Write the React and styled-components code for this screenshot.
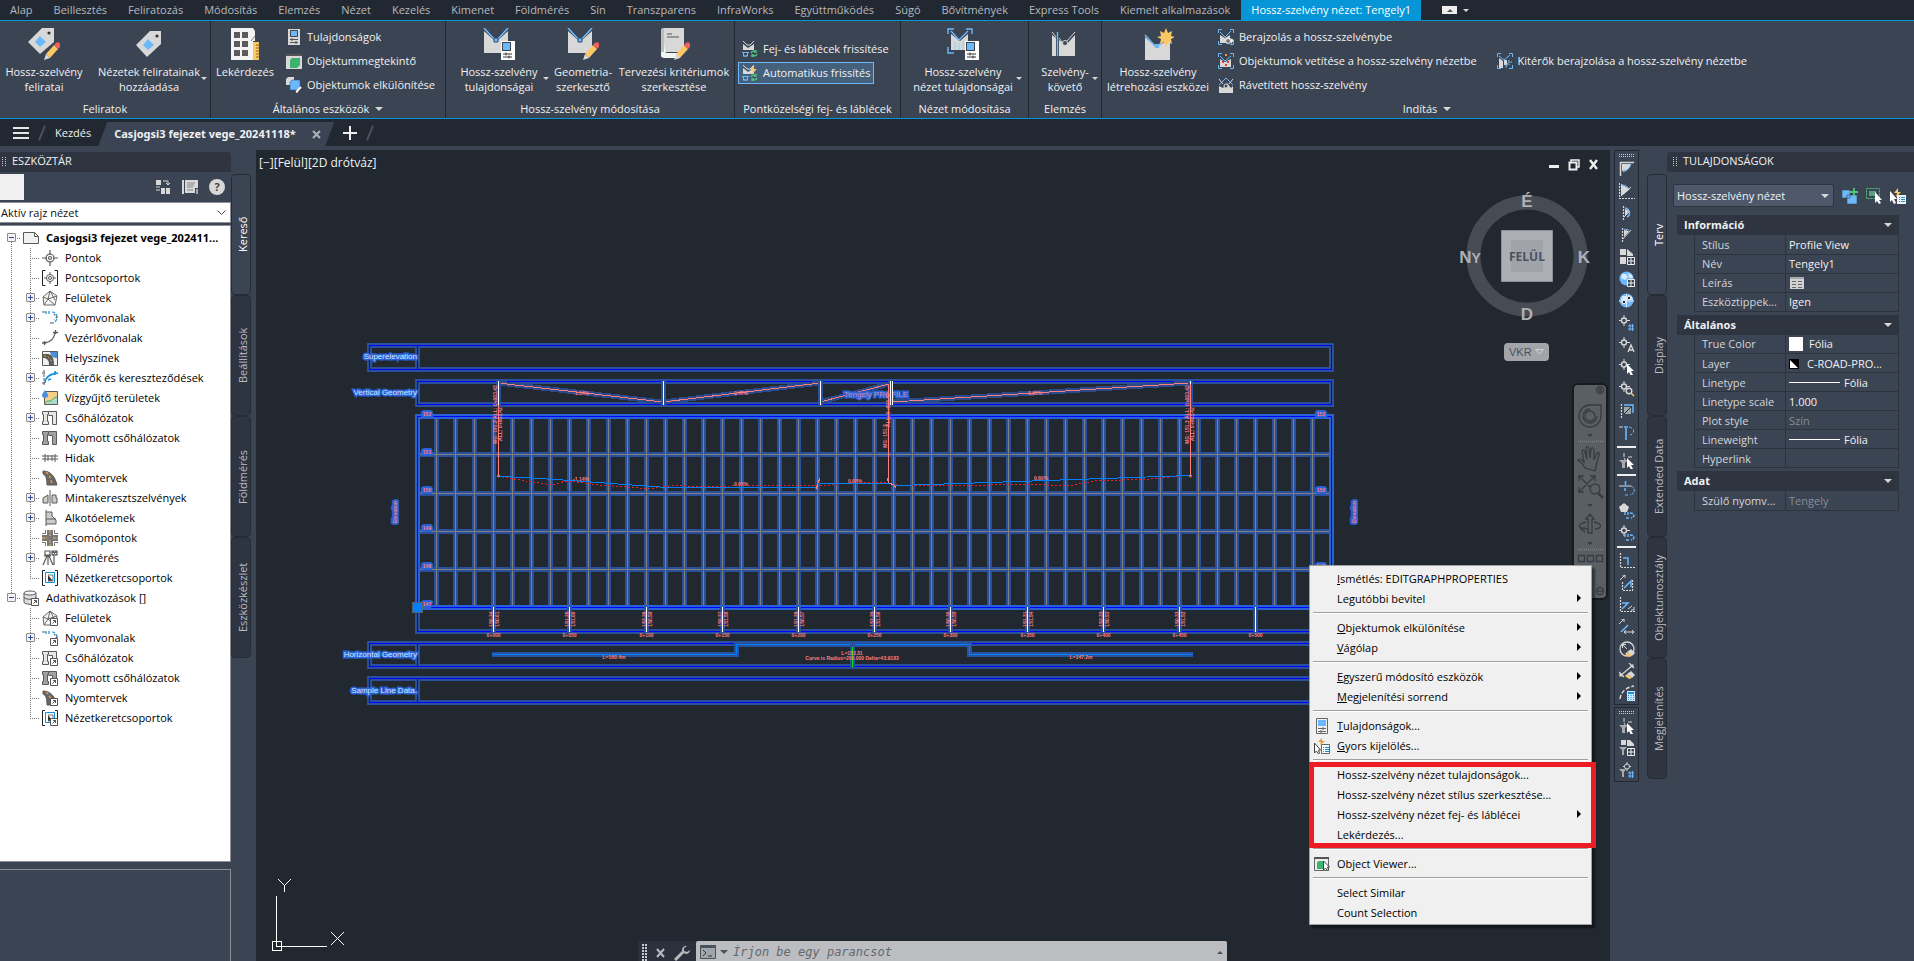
import React from 'react';
import styled, { createGlobalStyle, css } from 'styled-components';

const c = {
  dark: '#222831',
  panel: '#3b4453',
  header: '#2e3440',
  line: '#2c333e',
  accent: '#0696d7',
  text: '#f0f1f2',
  dim: '#b9bdc3',
  canvas: '#212830',
};

const Global = createGlobalStyle`
  * { box-sizing: border-box; }
  html, body, #root { height: 100%; }
  body { margin: 0; overflow: hidden; font: 11px/16px "Open Sans", "Noto Sans", sans-serif; color: ${c.text}; background: ${c.panel}; }
  button, select, input { font: inherit; color: inherit; margin: 0; border: 0; padding: 0; background: none; }
  ul { list-style: none; margin: 0; padding: 0; }
  svg { display: block; flex: none; }
`;

/* ---------- icons ---------- */
const G = '#d8d8d8';
const B = '#6cb8fb';
const Y = '#fbc866';
const GR = '#4fc57c';
const K = '#5a5a5a';

const Pencil = () => (
  <g>
    <path d="M18 26 26 17l4 4-8 9z" fill={Y} />
    <path d="M26 17l2-2c2-2 6 1 4 4l-2 2z" fill="#f0605c" />
    <path d="M18 26l4 4-6 2z" fill={G} />
  </g>
);
const Props = () => (
  <g>
    <path d="M18 13h14v19H18z" fill="#fff" />
    <path d="M19 14h9v9h-9z" fill="#3b4453" />
    <path d="M20 15h7v7h-7z" fill={B} />
    <path d="M20 26h9M20 29h9" stroke="#333" />
    <path d="M23 24.500v3M26 27.500v3" stroke="#333" />
  </g>
);
const Notch = () => (
  <g>
    <path d="M1 3 13 14 25 3V25H1z" fill={G} />
    <path d="M1 0 11 11M25 0 15 11" stroke={B} strokeWidth="1.600" />
    <path d="M11 10h4v4h-4z" fill={B} stroke="#2c4d70" />
  </g>
);
const big = {
  tagEdit: <g><path d="M14 0h12v14L12 26 0 14z" fill={G} /><circle cx="21" cy="5" r="1.600" fill="#333" /><path d="M12 8l6 6-6 5-5-5z" fill={B} /><Pencil /></g>,
  tag: <g transform="translate(3 3)"><path d="M14 0h11v13L11 26 0 14z" fill={G} /><circle cx="21" cy="5" r="1.600" fill="#333" /><path d="M12 8l6 6-6 5-5-5z" fill={B} /></g>,
  inquiry: <g><path d="M2 0h22l2 3v10H24v19H2z" fill="#f4f4f2" />{[4, 13, 22].map((y) => [5, 13].map((x) => <path key={`${x}-${y}`} d={`M${x} ${y}h6v6h-6z`} fill={K} />))}<path d="M24 14h6v18h-6z" fill={Y} /><path d="M27 17h3M27 20h3M27 23h3M27 26h3M27 29h3" stroke="#8a6a20" /><path d="M22 13l4-5" stroke="#777" /></g>,
  profProps: <g><Notch /><Props /></g>,
  profEdit: <g><Notch /><Pencil /></g>,
  book: <g><path d="M3 3c0-2 1-3 3-3h20v24H9c-3 0-4 1-4 3z" fill={G} /><path d="M3 3v24c0 3 2 3 4 3h15v-5H8" fill="#f4f4f4" /><path d="M3 3c0-2 1-3 3-3v24H3z" fill="#bdbdbd" /><path d="M9 6h5M9 9h12" stroke="#555" /><Pencil /></g>,
  viewProps: <g><path d="M4 6l9 7 8-7v16H4z" fill={G} /><path d="M4 3l8 9 9-9" fill="none" stroke={B} strokeWidth="1.400" /><path d="M8 14v8M12 15v7M16 13v9" stroke="#8fd6e0" /><path d="M1 6V1h6M19 1h6v5M1 19v6h6" fill="none" stroke={B} strokeWidth="1.400" /><Props /></g>,
  tracker: <g><path d="M3 7l4 3v18H3zM10 12l7 5 9-10v21H10z" fill={G} /><path d="M3 4l4 5M10 10l4 5M26 4l-8 9" stroke={G} /><path d="M8.500 4v24" stroke={B} strokeWidth="1.400" /><circle cx="16" cy="15" r="2.500" fill="#3b4453" stroke={G} /></g>,
  profNew: <g><path d="M3 9 14 19l14-8V32H3z" fill={G} /><path d="M3 7l10 11M16 18l6-6" stroke={B} strokeWidth="1.600" /><path d="M13 16h4v4h-4z" fill={B} /><path d="M24 0l2 5 4-2-1 5 4 1-4 2 1 5-4-2-2 5-2-5-4 2 1-5-4-2 4-1-1-5 4 2z" fill={Y} /></g>,
};
const Mini = () => <g><path d="M1 3l5 4 6-4v6H1z" fill={G} /><path d="M1 0l4 4h3l4-4" fill="none" stroke={G} /></g>;
const Cycle = () => <g><path d="M0 11.500h7M1.500 12v3h4v-3M1.500 15h4" stroke={B} fill="none" /><path d="M9 12a3 3 0 0 1 5-1M15 13a3 3 0 0 1-5 1M14 9v2h-2M10 16v-2h2" fill="none" stroke={GR} strokeWidth="1.400" /></g>;
const Corners = () => <path d="M.5 4V.5H4M12 .5h3.500V4M.5 12v3.500H4M12 15.500h3.500V12" fill="none" stroke={B} />;
const small = {
  props: <g><path d="M2 0h12v16H2z" fill={G} /><path d="M4.500 1.500h7v6h-7z" fill={B} stroke="#444" /><path d="M4 10.500h8M4 13.500h8M6 9v3M10 12v3" stroke="#555" /></g>,
  viewer: <g><path d="M0 1h16v15H0z" fill={G} /><path d="M0 1h16v2H0z" fill="#555" /><path d="M4 7l2-2h8v7l-3 3H4z" fill="#3cb46e" /></g>,
  isolate: <g><path d="M0 2l2-2h6v5L6 8H0z" fill={G} /><path d="M4 5l2-2h8v7l-3 3H4z" fill={B} stroke="#2d5f93" strokeWidth=".6" /><path d="M11 14l4-4M10 15l2-1" stroke="#fff" strokeWidth="2" /></g>,
  refresh: <g><Mini /><Cycle /></g>,
  auto: <g><Mini /><path d="M12 0l-4 5h3l-1 4 5-5h-3z" fill={Y} /><Cycle /></g>,
  draw: <g><Corners /><path d="M2 6l5 3 5-3v8H2z" fill={G} /><path d="M2 3l5 5 6-6" fill="none" stroke={B} /><circle cx="10" cy="12" r="2.500" fill="#777" stroke="#eee" /><path d="M12 9l4 2-3 4z" fill="#eee" /></g>,
  project: <g><Corners /><path d="M2 6l5 3 6-3v8H2z" fill={G} /><path d="M2 3l5 5 6-5" fill="none" stroke={B} /><path d="M7 1h2v2H7z" fill="#ef9a3c" /><path d="M4 8h2v2H4zM9 8h2v2H9zM7 11h2v2H7z" fill="#e63c3c" /></g>,
  overlay: <g><path d="M1 9l4 2 4-5 4 5 2-2v7H1z" fill={G} /><path d="M1 8l7-7 7 7" fill="none" stroke={B} /><path d="M1 2l4 5M15 2l-4 5" stroke={G} /><circle cx="8" cy="9" r="2" fill="#3b4453" stroke={G} /></g>,
  offset: <g><Corners /><path d="M2 5l4 3v7H2zM7 7h3v5H7z" fill={G} /><path d="M2 3l5 4 6-5" fill="none" stroke={B} /><path d="M9 15c0-4 2-6 6-6M8 12h4M12 7v5" fill="none" stroke={B} strokeDasharray="3 1" /></g>,
};

const Ref = () => <g><path d="M8.500 8.500h7v7h-7z" fill="#fff" stroke="#555" /><path d="M10.500 13.500l3-3M11 10.500h2.500V13" fill="none" stroke="#555" /></g>;
const Pipe = ({ f }) => <path d="M.5 1.500h6v3h-1v7h1v3h-6v-3h1v-7h-1zM6.500 1.500h8v13h-4v-9h-4" fill={f} stroke={K} />;
const tree = {
  doc: <path d="M.5 2.500h11l4 4v7H.5zM11.500 2.500v4h4" fill="#f1f1f1" stroke={K} />,
  point: <g fill="none" stroke={K} strokeWidth="1.200"><circle cx="8" cy="8" r="1.500" /><circle cx="8" cy="8" r="4" /><path d="M8 0v5M8 11v5M0 8h5M11 8h5" /></g>,
  pointGroup: <g fill="none"><path d="M3.500.5h-3v15h3M12.500.5h3v15h-3" stroke="#222" /><circle cx="8" cy="8" r="1.500" stroke={K} /><circle cx="8" cy="8" r="3.500" stroke={K} /><path d="M8 2v3M8 11v3M2 8h3M11 8h3" stroke={K} /></g>,
  surface: <path d="M8 1l7 5-2 9H2L1 7zM8 1l-2 8-5-2M8 1l5 9M6 9l7 6M15 6l-9 3-4 6" fill="#f4f4f4" stroke={K} strokeWidth=".9" />,
  align: <g fill="none" strokeWidth="1.200"><path d="M0 2h3M8 13h4" stroke={K} /><path d="M4 1v3M7 1v3M10 2c4 0 5 3 5 5s-1 4-2 5" stroke="#0f8fe0" strokeDasharray="3 2" /><path d="M12 4l3 3-3 3" stroke={K} strokeDasharray="2 2" /></g>,
  feature: <path d="M0 13h4M2.500 11v4M3 13c6-1 9-4 10-10M13.500 0v4M11 2.500h5" fill="none" stroke={K} strokeWidth="1.300" />,
  site: <g><path d="M.5 1.500h15v14H.5z" fill="#f0f0f0" stroke={K} /><path d="M8 2h7v6c-4 0-6-2-7-6z" fill="#4a90d9" /><path d="M1 4h5c5 1 6 5 6 11H7C7 10 5 8 1 8z" fill={K} /><path d="M2 6c4 0 7 2 8 8" stroke="#ef9a3c" fill="none" strokeDasharray="2 2" /></g>,
  turnout: <g fill="none"><path d="M2 0v15M0 3h4M0 13h4" stroke={K} strokeDasharray="3 1" /><path d="M3 13c0-6 5-9 13-10M5 8l4-4M6 10l3-1M13 1v4" stroke="#0f8fe0" strokeWidth="1.600" /></g>,
  catchment: <g><path d="M2.500 1.500h13v13h-13z" fill="#f6cf8b" stroke={K} /><path d="M3 14l12-6v6z" fill="#a8dcc8" /><path d="M3 14c0-3 3-3 5-3s3-4 7-4" fill="none" stroke="#2a7" /><path d="M3 0c2 3 3 4 3 5a3 3 0 0 1-6 0c0-1 1-2 3-5z" fill="#4a90d9" /></g>,
  pipe: <Pipe f="#e6e6e6" />,
  pressure: <Pipe f="#a0a0a0" />,
  bridge: <path d="M0 6h16M0 9h16M3 4v8M6 5v6M10 5v6M13 4v8" stroke={K} fill="none" />,
  corridor: <g><path d="M1 1c8 0 12 6 14 14H5C5 9 4 5 1 4z" fill="#666" stroke={K} /><path d="M4 2c4 3 5 7 6 13" fill="none" stroke="#ef9a3c" strokeWidth="1.500" strokeDasharray="3 2" /></g>,
  assembly: <g><path d="M1 8l5-3v8H1zM10 5h4v3h1v5h-5z" fill="#ccc" stroke={K} /><path d="M8 0v16" stroke={K} /></g>,
  subassembly: <path d="M4 0v16M4 2h6v4l4 4v4H4M4 9h10" fill="#ccc" stroke={K} />,
  intersection: <g><path d="M5 0h6v5h5v6h-5v5H5v-5H0V5h5z" fill="#777" /><path d="M8 0v6M8 10v6M0 8h5M11 8h5" stroke="#f5b35a" strokeDasharray="3 1" /><path d="M0 3.500h3.500V0M16 3.500h-3.500V0M0 12.500h3.500V16M16 12.500h-3.500V16" fill="none" stroke="#777" /></g>,
  survey: <g fill="none" stroke={K} strokeWidth="1.200"><path d="M3 1h5v4H3zM5 6L1 15M6 6v9M7 6l4 9M2 6h7M12 5v10M10 1h5v4h-5zM10 1l5 4M15 1l-5 4" /></g>,
  frame: <g fill="none"><path d="M3 .5H.5v15H3M13 .5h2.500v15H13" stroke="#222" /><path d="M3.500 2.500h9v10h-9z" stroke="#0f8fe0" /><path d="M6 5l5 6H6z" fill="#333" /><path d="M6 5h5v6H6" stroke="#777" /></g>,
  data: <g><path d="M1 3v9c0 3 12 3 12 0V3" fill="#ddd" stroke={K} /><ellipse cx="7" cy="3" rx="6" ry="2" fill="#f5f5f5" stroke={K} /><path d="M1 7c0 3 12 3 12 0" fill="none" stroke={K} /><Ref /></g>,
};

const Pt = () => <g fill="none" stroke={G}><path d="M5 0v3M5 8v3M0 5.500h2M8 5.500h3" /><circle cx="5" cy="5.500" r="2.500" strokeWidth="1.400" /></g>;
const Cursor = () => <path d="M8 5v10l2-2 2 4 2-1-2-4h3z" fill="#fff" />;
const Alig = () => <path d="M6 9v3M9 9v3M11 10c5 0 5 4 1 5M7 15h3" fill="none" stroke={B} strokeWidth="1.400" strokeDasharray="3 1" />;
const Funnel = () => <g><path d="M5 0v4M5 5l2 3M9 4h4" stroke={G} /><path d="M0 7h9L6 10v5H3v-5z" fill="#aaa" /></g>;
const Globe = () => <g><circle cx="7.500" cy="7.500" r="7" fill={B} /><path d="M3 3l4 0 2 3-3 3-4-2zM9 2l4 2 1 3-4 0z" fill="#d7ecfd" /></g>;
const Dots = ({ d }) => <path d={d} fill="none" stroke={G} strokeWidth="1.200" strokeDasharray="2 1" />;
const Grid4 = () => <g><path d="M8.500 8.500h7v7h-7z" fill="#3b4453" stroke="#eee" /><path d="M12 9v6M9 12h6" stroke="#eee" /></g>;
const Eraser = () => <g><path d="M8 11l4-3 4 4-3 3z" fill={G} /><path d="M8 11l5 4-3 1-4-3z" fill={Y} /></g>;
const tool = {
  angle: <g><path d="M1.500 15V1.500H15" fill="none" stroke={G} strokeWidth="1.500" /><path d="M3 3h9c-1 4-4 7-9 7z" fill={G} /><path d="M12 3c-1 4-4 7-8 8" stroke={B} fill="none" /></g>,
  bearing: <g><Dots d="M.5 0v15.500H16" /><path d="M2 1l9 5-6 5-3 2z" fill={G} /><path d="M2 13L12 4" stroke={G} /><path d="M3 2c4 0 6 2 7 4" stroke={B} fill="none" /></g>,
  deflect: <g><Dots d="M4.500 1v14" /><path d="M5 12L11 6" stroke={G} /><path d="M6 3c5 1 6 7 2 9" fill="none" stroke={B} strokeWidth="1.500" /><path d="M6 4l4 2-4 5z" fill={G} /></g>,
  azimuth: <g><Dots d="M3.500 1v14" /><path d="M4 12L12 3" stroke={G} /><path d="M5 3l5 1-5 6z" fill={G} /><path d="M5 2l5 1" stroke={B} /></g>,
  sheet: <g><path d="M1 0h6v6H1zM8 0l6 5v2H8zM1 8h6v7H1z" fill={G} /><Grid4 /></g>,
  globeGrid: <g><Globe /><Grid4 /></g>,
  globe: <g><Globe /><path d="M0 8h15M7.500 1v13" stroke="#d7ecfd" /><circle cx="5" cy="9" r="1.800" fill="#222" stroke="#fff" /><circle cx="10" cy="5" r="1.800" fill="#222" stroke="#fff" /></g>,
  ptNum: <g><Pt /><path d="M9 11h6M9 14h6M11 9v7M13.500 9v7" stroke={B} /></g>,
  ptName: <g><Pt /><path d="M9 15l3-7 3 7M10 13h4" fill="none" stroke={G} strokeWidth="1.300" /></g>,
  ptPick: <g><Pt /><Cursor /></g>,
  ptZoom: <g><Pt /><circle cx="10" cy="10" r="2.800" fill="none" stroke={G} strokeWidth="1.400" /><path d="M12 12l3 3" stroke={Y} strokeWidth="1.500" /></g>,
  side: <g><Dots d="M2.500 1v14" /><path d="M5 4h7v7H5z" fill="#9aa" /><path d="M5 2h9v8" fill="none" stroke={B} strokeWidth="1.500" /><path d="M5 11l7-7" stroke="#222" /></g>,
  station: <g><path d="M0 2h4" stroke={G} /><path d="M5 2h4M7 3v12" stroke={B} strokeWidth="1.600" /><path d="M10 2c6 1 6 7 1 8" fill="none" stroke={B} strokeDasharray="3 2" /></g>,
  filter: <g><Funnel /><Cursor /></g>,
  alignPt: <g><path d="M0 5h4M9 5h3" stroke={G} /><path d="M6.500 0v4M4 5h5M6 7v3" stroke={B} strokeWidth="1.500" /><path d="M12 5c5 2 4 8-1 9M6 14h4" fill="none" stroke={B} strokeDasharray="3 1" /></g>,
  alignSurf: <g><path d="M5 0l5 4-2 5H2L0 4z" fill={G} /><Alig /></g>,
  alignPoint: <g><Pt /><Alig /></g>,
  corner: <g><Dots d="M1.500 0v14.500H16" /><path d="M4 5h5v7" fill="none" stroke={B} strokeWidth="1.500" /></g>,
  slope: <g><path d="M1 5L6 0M3 0h3v3" stroke={G} fill="none" /><Dots d="M3.500 7v8.500h10V5" /><path d="M5 13l7-7v6" stroke={B} fill="none" strokeWidth="1.500" /></g>,
  slopeDown: <g><Dots d="M1.500 0v14.500H16" /><path d="M3 6h6L3 12" stroke={B} fill="none" strokeWidth="1.500" /><path d="M9 12l4-3M12 13h3v-3" stroke={G} fill="none" /></g>,
  distance: <g><path d="M0 5l5-5M2 0h3v3M5 13h10M7 11l-2 2 2 2M13 11l2 2-2 2" fill="none" stroke={G} /><path d="M2 13L9 6" stroke={B} strokeWidth="1.600" /></g>,
  circle: <g><circle cx="8" cy="8" r="7" fill="none" stroke={G} strokeWidth="1.300" /><path d="M8 8L4 4M3.500 7V3.500H7" stroke={G} fill="none" /><Eraser /></g>,
  dim: <g><path d="M1 13L14 2M10 0l5 5M0 9l5 5M14 5V2h-3M1 10v3h3" stroke={G} fill="none" strokeWidth="1.200" /><Eraser /></g>,
  calc: <g><path d="M1 14C2 7 6 3 15 1" fill="none" stroke={G} strokeWidth="1.500" strokeDasharray="4 2" /><path d="M8 6h8v10H8z" fill="#cfe8fb" /><path d="M9 7h6v2H9z" fill="#1390e0" /><path d="M9.500 10v5M12 10v5M14.500 10v5" stroke="#1390e0" strokeDasharray="1 1" /></g>,
  filterSheet: <g><path d="M2 0h5v5H2zM8 0h3l4 4v2H8z" fill={G} /><path d="M0 7h8L5 10v5H3v-5z" fill="#aaa" /><Grid4 /></g>,
  filterNum: <g><path d="M8 0v2M8 7v2M4 4.500h2M10 4.500h2" stroke={G} /><circle cx="8" cy="4.500" r="2.500" fill="none" stroke={G} /><path d="M0 7h7L5 10v5H3v-5z" fill="#aaa" /><path d="M9 11h6M9 14h6M11 9v7M13.500 9v7" stroke={B} /></g>,
};
const misc = {
  swap: <g><path d="M1 1h5v5H1zM6 9h4v6H6zM11 9h4v6h-4z" fill={G} /><path d="M1 8h4M1 11h4M8 2h5v4M11 4l2 2 2-2" fill="none" stroke={G} /></g>,
  list: <g><path d="M0 1h2v14H0zM3 1h13v8h-3v5H3z" fill={G} /><path d="M5 4h8M5 6h7M5 8h6M5 11h6" stroke="#888" /><path d="M14 10h2v5h-2z" fill="#aaa" /></g>,
  addSel: <g><path d="M0 2h8v8H0zM5 7h10v9H5z" fill={B} stroke="#3b4453" strokeWidth=".6" /><path d="M12 0v8M8 4h8" stroke={GR} strokeWidth="1.800" /></g>,
  select: <g><path d="M.5.5h13v10H.5z" fill="none" stroke={GR} strokeDasharray="2 1" /><path d="M3 3h7v5H3z" fill="#5b9f80" /><path d="M9 4v11l2-2 2 3 2-1-2-3h3z" fill="#fff" /></g>,
  quick: <g><path d="M0 3v11l2-2 2 4 2-1-2-4h3z" fill="#fff" /><path d="M8 0L4 5h3l-1 4 5-5H8z" fill={Y} /><path d="M7 7h9v9H7z" fill="#f3f3f3" /><path d="M9 9.500h1M11 9.500h4M9 11.500h1M11 11.500h4M9 13.500h1M11 13.500h4" stroke="#1390e0" /></g>,
  mProps: <g><path d="M2.500.5h11v15h-11z" fill="#f2f2f2" stroke="#666" /><path d="M4 2h8v6H4z" fill={B} /><path d="M4 10.500h8M4 13.500h8M9 9v3M7 12v3" stroke="#666" /></g>,
  mQuick: <g><path d="M.5 5v10l2-2 2 3 1-1-1-3h2z" fill="#fff" stroke="#444" /><path d="M8 0L4 4h3l-1 3 5-4H8z" fill="#f0962e" /><path d="M7.500 6.500h8v9h-8z" fill="#fff" stroke="#666" /><path d="M9 9.500h1M11 9.500h4M9 11.500h1M11 11.500h4M9 13.500h1M11 13.500h4" stroke="#1390e0" /></g>,
  mView: <g><path d="M.5 1.500h14v13H.5z" fill="#eee" stroke="#666" /><path d="M0 1h15v2H0z" fill="#555" /><path d="M3 6l2-1h5v8H3z" fill="#3cb46e" /><path d="M9.500 5v9l2-2 2 3 1-1-1-3h2z" fill="#fff" stroke="#444" /></g>,
  sheet: <g><path d="M1 2h14v12H1z" fill="#d0d2d4" /><path d="M1 2h14v2H1z" fill="#aaa" /><path d="M3 6.500h4M9 6.500h4M3 9.500h4M9 9.500h4M3 12.500h4M9 12.500h4" stroke="#666" /></g>,
};
const Icon = ({ d, size = 16 }) => (
  <svg width={size} height={size} viewBox={`0 0 ${size} ${size}`} aria-hidden="true">{d}</svg>
);
const Grip = () => (
  <svg width="4" height="9" viewBox="0 0 4 9"><path d="M.5 0v9M3.500 0v9" stroke="#c8cacd" strokeDasharray="1 1" /></svg>
);
const GripWide = () => (
  <svg width="15" height="5" viewBox="0 0 15 5"><path d="M0 1.500h15M0 3.500h15" stroke="#c8cacd" strokeDasharray="1 1" /></svg>
);

const Caret = styled.span`
  flex: none;
  width: 0;
  height: 0;
  border: ${(p) => p.$s || 3}px solid transparent;
  border-bottom-width: 0;
  border-top-color: ${(p) => p.$c || '#d8d8d8'};
`;

/* ---------- ribbon ---------- */
const Shell = styled.div`
  display: flex;
  flex-direction: column;
  height: 100vh;
`;
const TabRow = styled.nav`
  display: flex;
  gap: 1px;
  height: 21px;
  flex: none;
  background: ${c.dark};
  border-bottom: 1px solid ${c.accent};
`;
const RibbonTab = styled.button`
  padding: 0 10px;
  white-space: nowrap;
  color: ${(p) => (p.$on ? '#fff' : '#b6b9bd')};
  background: ${(p) => (p.$on ? c.accent : 'none')};
`;
const Collapse = styled.button`
  display: flex;
  align-items: center;
  gap: 6px;
  margin-left: 20px;
  span:first-child {
    display: flex;
    align-items: center;
    justify-content: center;
    width: 15px;
    height: 8px;
    background: #eee;
  }
`;
const UpCaret = styled.i`
  border: 3px solid transparent;
  border-top-width: 0;
  border-bottom-color: ${(p) => p.$c || '#555'};
`;
const Ribbon = styled.div`
  display: flex;
  flex: none;
  height: 98px;
  border-bottom: 1px solid ${c.accent};
`;
const Panel = styled.section`
  display: flex;
  flex-direction: column;
  flex: none;
  width: ${(p) => p.$w}px;
  border-right: ${(p) => (p.$last ? 0 : 1)}px solid ${c.dark};
`;
const PanelBody = styled.div`
  display: flex;
  flex: 1;
`;
const PanelTitle = styled.div`
  display: flex;
  align-items: center;
  justify-content: center;
  gap: 6px;
  height: 18px;
  white-space: nowrap;
`;
const BigBtn = styled.button`
  position: relative;
  display: flex;
  flex-direction: column;
  align-items: center;
  gap: 4px;
  flex: none;
  width: ${(p) => p.$w}px;
  padding-top: 7px;
  line-height: 15px;
  white-space: pre;
  text-align: center;
  ${Caret} {
    position: absolute;
    right: 3px;
    top: 56px;
  }
`;
const Stack = styled.div`
  display: flex;
  flex-direction: column;
  align-items: flex-start;
  gap: 2px;
  padding: ${(p) => (p.$mid ? 17 : 5)}px 0 0 ${(p) => (p.$flush ? 0 : 3)}px;
`;
const StackRow = styled.div`
  display: flex;
  gap: 12px;
`;
const SmallBtn = styled.button`
  display: flex;
  align-items: center;
  gap: 5px;
  height: 22px;
  padding: 0 3px;
  white-space: nowrap;
  border: 1px solid ${(p) => (p.$on ? B : 'transparent')};
  background: ${(p) => (p.$on ? '#45607b' : 'none')};
`;

const Big = ({ w, icon, label, caret }) => (
  <BigBtn $w={w}>
    <Icon d={big[icon]} size={32} />
    <span>{label}</span>
    {caret && <Caret />}
  </BigBtn>
);
const Small = ({ icon, label, on }) => (
  <SmallBtn $on={on}>
    <Icon d={small[icon]} />
    {label}
  </SmallBtn>
);

const tabs = ['Alap', 'Beillesztés', 'Feliratozás', 'Módosítás', 'Elemzés', 'Nézet', 'Kezelés', 'Kimenet', 'Földmérés', 'Sín', 'Transzparens', 'InfraWorks', 'Együttműködés', 'Súgó', 'Bővítmények', 'Express Tools', 'Kiemelt alkalmazások', 'Hossz-szelvény nézet: Tengely1'];

/* ---------- file tabs ---------- */
const FileBar = styled.div`
  display: flex;
  align-items: center;
  flex: none;
  height: 27px;
  padding-left: 13px;
  background: ${c.dark};
`;
const Burger = styled.button`
  width: 16px;
  height: 12px;
  border-top: 2px solid #e6e6e6;
  border-bottom: 2px solid #e6e6e6;
  background: linear-gradient(#e6e6e6, #e6e6e6) center / 100% 2px no-repeat;
`;
const Slash = styled.i`
  width: 2px;
  height: 16px;
  margin: 0 12px;
  background: #4a515c;
  transform: rotate(22deg);
`;
const FileTab = styled.button`
  white-space: nowrap;
`;
const ActiveFile = styled.div`
  display: flex;
  align-items: center;
  justify-content: space-between;
  align-self: flex-end;
  width: 236px;
  height: 24px;
  margin: 0 9px 0 7px;
  padding: 0 13px 0 16px;
  font-family: "Noto Sans", sans-serif;
  font-weight: 700;
  white-space: nowrap;
  background: ${c.panel};
  clip-path: polygon(9px 0, 100% 0, calc(100% - 9px) 100%, 0 100%);
`;

/* ---------- work area ---------- */
const Main = styled.div`
  display: flex;
  flex: 1;
  min-height: 0;
  padding-top: 4px;
`;
const Side = styled.aside`
  display: flex;
  flex: none;
  width: 256px;
  padding-top: 2px;
`;
const SideBody = styled.div`
  display: flex;
  flex-direction: column;
  width: 231px;
`;
const PaletteTitle = styled.div`
  display: flex;
  align-items: center;
  gap: 6px;
  height: 20px;
  padding: 0 0 2px ${(p) => p.$pad || 2}px;
  background: ${c.header};
  border-top-${(p) => (p.$left ? 'left' : 'right')}-radius: 4px;
`;
const SideTools = styled.div`
  display: flex;
  align-items: center;
  gap: 11px;
  height: 30px;
  padding-right: 6px;
`;
const Blank = styled.div`
  width: 24px;
  height: 26px;
  margin-right: auto;
  background: #f0f0f0;
`;
const Help = styled.button`
  width: 16px;
  height: 16px;
  border-radius: 50%;
  background: ${G};
  color: #444;
  font-weight: 700;
  line-height: 16px;
`;
const SelectBox = styled.label`
  display: flex;
  align-items: center;
  position: relative;
  select { appearance: none; width: 100%; height: 100%; outline: 0; }
  svg, ${Caret} { position: absolute; right: 4px; pointer-events: none; }
  ${(p) => (p.$dark
    ? css`width: 161px; height: 23px; background: #4d596b; border: 1px solid ${c.header}; border-radius: 2px; select { padding-left: 3px; }`
    : css`height: 21px; margin-bottom: 2px; background: #fff; color: #111; border: 1px solid #8b8f95; border-left: 0; select { padding-left: 1px; }`)}
`;
const TreeBox = styled.div`
  flex: 1;
  padding-top: 2px;
  background: #fff;
  color: #000;
  border-top: 1px solid #8b8f95;
  border-bottom: 1px solid #8b8f95;
  border-right: 1px solid #8b8f95;
  overflow: hidden;
`;
const TreeRow = styled.li`
  display: flex;
  align-items: center;
  height: 20px;
  padding-left: 4px;
  white-space: nowrap;
  ${(p) => p.$bold && css`font-family: "Noto Sans", sans-serif; font-weight: 700;`}
  svg { margin-right: 7px; }
`;
const dots = (dir) => `repeating-linear-gradient(${dir}, #777 0 1px, transparent 1px 2px)`;
const Branch = styled.span`
  position: relative;
  flex: none;
  width: 19px;
  height: 20px;
  padding: 5px 0 0 3px;
  &::before {
    content: ${(p) => (p.$line ? "''" : 'none')};
    position: absolute;
    left: 7px;
    width: 1px;
    top: ${(p) => (p.$line === 'start' ? 10 : 0)}px;
    bottom: ${(p) => (p.$line === 'end' ? 10 : 0)}px;
    background: ${dots('to bottom')};
  }
  &::after {
    content: ${(p) => (p.$arm ? "''" : 'none')};
    position: absolute;
    left: 7px;
    width: 10px;
    height: 1px;
    top: 10px;
    background: ${dots('to right')};
  }
`;
const Toggle = styled.button`
  position: relative;
  z-index: 1;
  display: block;
  width: 9px;
  height: 9px;
  border: 1px solid #8a8a8a;
  border-radius: 1px;
  background:
    linear-gradient(#2a4a9a, #2a4a9a) center / 5px 1px no-repeat,
    linear-gradient(#2a4a9a, #2a4a9a) center / 1px ${(p) => (p.$open ? 0 : 5)}px no-repeat, #f4f4f4;
`;
const LowerBox = styled.div`
  flex: none;
  height: 92px;
  margin-top: 7px;
  border: 1px solid #8b8f95;
  border-width: 1px 1px 0 0;
`;
const VTabs = styled.div`
  display: flex;
  flex-direction: column;
  flex: none;
  width: 20px;
  padding-top: 22px;
`;
const VTab = styled.button`
  display: flex;
  align-items: center;
  justify-content: center;
  height: 121px;
  flex: none;
  padding-right: 3px;
  writing-mode: vertical-rl;
  transform: rotate(180deg);
  border: 1px solid #262c36;
  border-radius: 4px;
  white-space: nowrap;
  color: ${(p) => (p.$on ? '#fff' : c.dim)};
  background: ${(p) => (p.$on ? c.panel : c.header)};
`;

const linked = (k) => <g>{tree[k]}<Ref /></g>;
const treeRows = [
  ['Pontok', tree.point], ['Pontcsoportok', tree.pointGroup], ['Felületek', tree.surface, 1], ['Nyomvonalak', tree.align, 1],
  ['Vezérlővonalak', tree.feature], ['Helyszínek', tree.site], ['Kitérők és kereszteződések', tree.turnout, 1],
  ['Vízgyűjtő területek', tree.catchment], ['Csőhálózatok', tree.pipe, 1], ['Nyomott csőhálózatok', tree.pressure],
  ['Hidak', tree.bridge], ['Nyomtervek', tree.corridor], ['Mintakeresztszelvények', tree.assembly, 1],
  ['Alkotóelemek', tree.subassembly, 1], ['Csomópontok', tree.intersection], ['Földmérés', tree.survey, 1], ['Nézetkeretcsoportok', tree.frame],
];
const refRows = [
  ['Felületek', linked('surface')], ['Nyomvonalak', linked('align'), 1], ['Csőhálózatok', linked('pipe')],
  ['Nyomott csőhálózatok', linked('pressure')], ['Nyomtervek', linked('corridor')], ['Nézetkeretcsoportok', linked('frame')],
];
const Leaves = ({ rows, outer }) => rows.map(([label, icon, plus], i) => (
  <TreeRow key={label}>
    <Branch $line={outer} />
    <Branch $line={i === rows.length - 1 ? 'end' : 'mid'} $arm>{plus && <Toggle aria-label={label} />}</Branch>
    <Icon d={icon} />
    {label}
  </TreeRow>
));

/* ---------- drawing ---------- */
const Canvas = styled.main`
  position: relative;
  flex: 1;
  min-width: 0;
  background: ${c.canvas};
  overflow: hidden;
`;
const Sheet = styled.svg`
  position: absolute;
  left: 0;
  top: 0;
  width: 100%;
  height: 100%;
  font-family: "Liberation Sans", Arial, sans-serif;
  path { shape-rendering: crispEdges; }
`;
const ViewLabel = styled.div`
  position: absolute;
  left: 3px;
  top: 5px;
  font-size: 12px;
`;
const WinButtons = styled.div`
  position: absolute;
  right: 11px;
  top: 9px;
`;
const ViewCube = styled.div`
  position: absolute;
  right: 16px;
  top: 36px;
`;
const Vkr = styled.button`
  position: absolute;
  right: 61px;
  top: 193px;
  display: flex;
  align-items: center;
  justify-content: space-between;
  width: 45px;
  height: 18px;
  padding: 0 5px;
  border-radius: 4px;
  background: #a3a5aa;
  color: #4c525b;
  font-family: "Liberation Sans", Arial, sans-serif;
`;
const NavBar = styled.div`
  position: absolute;
  right: 4px;
  top: 235px;
  width: 32px;
  height: 213px;
  border-radius: 4px;
  background: #5a5f63;
  box-shadow: 0 0 0 2px #171b20;
`;

const halo = '#2a509c';
const bright = '#2a62d6';
const pink = '#ff7f7f';
const Halo = ({ d, line = '#0000ff', h = halo, w = 5 }) => (
  <g fill="none">
    <path d={d} stroke={h} strokeWidth={w} />
    <path d={d} stroke={line} />
  </g>
);
const BandText = ({ y, children }) => (
  <text x="417" y={y} textAnchor="end" fontSize="8" fill="#d5e6ff" stroke="#2b63d9" strokeWidth="3" paintOrder="stroke">{children}</text>
);
const Tiny = ({ x, y, v, glow, children }) => (
  <text x={v ? undefined : x} y={v ? undefined : y} transform={v ? `translate(${x} ${y}) rotate(-90)` : undefined}
    textAnchor="middle" fontSize="5" fontWeight="700" fill={pink} stroke={glow ? bright : 'none'} strokeWidth="4" strokeLinejoin="round" paintOrder="stroke">{children}</text>
);

const Drawing = () => {
  const xs = Array.from({ length: 47 }, (_, i) => Math.round(417 + 19.05 * (i + 1)) + 0.5);
  const majors = xs.filter((_, i) => (i + 1) % 4 === 0);
  const minorsPath = xs.map((x) => `M${x} 414V609`).join('');
  const rowsPath = [454.5, 493.5, 531.5, 569.5].map((y) => `M415 ${y}H1334`).join('');
  const majorPath = majors.map((x) => `M${x} 607V632`).join('');
  return (
    <Sheet aria-label="Tengely1 PROFILE">
      <g transform="translate(-256 -150)">
        <Halo d="M369.500 345.500H1331.500V369.500H369.500zM417.500 345V370" />
        <Halo d="M417.500 381.500H1331.500V404.500H417.500z" />
        <path d={minorsPath + rowsPath} stroke={halo} strokeWidth="5" />
        <path d={minorsPath + rowsPath} stroke="#808080" />
        <Halo d="M417.500 607V631.500H1331.500V607" />
        <Halo d="M417.500 416.500H1331.500V607.500H417.500z" h={bright} />
        <path d={majorPath} stroke={halo} strokeWidth="5" />
        <path d={majorPath} stroke="#fff" />
        <Halo d="M369.500 643.500H1331.500V666.500H369.500zM417.500 643V667" />
        <Halo d="M369.500 678.500H1331.500V702.500H369.500zM417.500 678V703" />

        {majors.slice(0, 10).map((x, i) => (
          <g key={x}>
            <Tiny v x={x - 1} y={619}>{`15${i % 3}.${24 + i}`}</Tiny>
            <Tiny v x={x + 5} y={619}>{`15${i % 2}.${61 - i}`}</Tiny>
          </g>
        ))}
        {majors.map((x, i) => <Tiny key={x} x={x} y={637}>{`0+${String(i * 50).padStart(3, '0')}`}</Tiny>)}
        {['152', '151', '150', '149', '148', '147'].map((t, i) => (
          <g key={t}>
            <Tiny glow x={427} y={416 + i * 38}>{t}</Tiny>
            {i % 2 === 0 && <Tiny glow x={1321} y={416 + i * 38}>{t}</Tiny>}
          </g>
        ))}
        <Tiny v glow x={397} y={512}>Elevation</Tiny>
        <Tiny v glow x={1356} y={512}>Elevation</Tiny>

        <Halo d="M498 383 663 402 820 383M820 402 889 384M893 402 1190 383" line={pink} h="#2a4a8c" />
        <text x="844" y="397" fontSize="8" fill="#c28bbd" stroke={bright} strokeWidth="3" paintOrder="stroke">Tengely PROFILE</text>
        <Halo d="M498.500 381V405M663.500 381V405M820.500 381V405M890.500 381V405M1190.500 381V405" line="#fff" />
        <path d="M892.500 381V405" stroke="#fff" />
        <path d="M498.500 405V476M888.500 384V483M1190.500 384V476" stroke={pink} />
        {[[497, 402], [502, 424], [890, 410], [1189, 402], [1194, 424]].map(([x, y]) => <Tiny key={x} v x={x} y={y}>ÁLL: 0+003.42</Tiny>)}
        {[[497, 432], [887, 436], [1189, 432]].map(([x, y]) => <Tiny key={x} v x={x} y={y}>MG: 151.2</Tiny>)}
        {[[581, 395, '-1.14%'], [741, 395, '0.47%'], [1035, 395, '0.60%'], [581, 481, '-1.14%'], [741, 486, '0.02%'], [855, 483, '0.03%'], [1041, 480, '0.60%']].map(([x, y, t]) => (
          <Tiny key={`${x}-${y}`} x={x} y={y}>{t}</Tiny>
        ))}
        <path d="M498 476 520 480 552 485 566 481 600 485 650 489 672 485.500 700 486.500 790 485 818 486 840 484 862 482 882 482 897 485 960 486 990 485 1026 484 1068 486 1095 481 1150 479 1190 475" fill="none" stroke="#f01e1e" strokeDasharray="2 2" />
        <path d="M498 476 563 480 660 487H816L821 483.500H889L896 485.500 960 483.500 1190 475.500" fill="none" stroke="#007fff" />
        <path d="M816 489l2-5M818 483l2-5M887 478l2 5 5 2 2 3" stroke={pink} fill="none" />
        <circle cx="498.500" cy="476" r="1" fill="none" stroke={pink} />
        <circle cx="1190.500" cy="476" r="1" fill="none" stroke={pink} />

        <Halo d="M492 654.500H736.500V644.500H969.500V654.500H1193" line="#007fff" h="#25539f" />
        <path d="M852.500 642V668" stroke={halo} strokeWidth="5" />
        <path d="M852.500 647V667" stroke="#00e21e" />
        <Tiny x={614} y={659}>L=160.4m</Tiny>
        <Tiny x={1081} y={659}>L=147.2m</Tiny>
        <Tiny x={852} y={655}>L=153.31</Tiny>
        <Tiny x={852} y={660}>Curve is Radius=200.000 Delta=43.9183</Tiny>

        <BandText y={359}>Superelevation</BandText>
        <BandText y={395}>Vertical Geometry</BandText>
        <BandText y={657}>Horizontal Geometry</BandText>
        <BandText y={693}>Sample Line Data.</BandText>
        <path d="M412.500 602.500h10v10h-10z" fill="#007fff" stroke="#5b6068" />

        <g fill="none" stroke="#fff">
          <path d="M272.500 941.500h9v9h-9zM276.500 946.500V896M276 946.500H327" />
          <path d="M278 879l6.500 6.500L291 879M284.500 885V892M331 932l13 13M344 932l-13 13" />
        </g>
      </g>
    </Sheet>
  );
};

const Cube = () => (
  <ViewCube>
    <svg width="134" height="144" viewBox="1460 186 134 144" fontFamily="Liberation Sans, Arial, sans-serif" fontWeight="700" textAnchor="middle">
      <circle cx="1527" cy="256" r="53.500" fill="none" stroke="#474b54" strokeWidth="14" />
      <path d="M1501.500 230.500h51v51h-51z" fill="#acb0b5" stroke="#8c8f92" />
      <path d="M1511 240h32v32h-32z" fill="#a0a4aa" />
      <text x="1527" y="261" fontSize="12" fontFamily="Open Sans, sans-serif" fill="#4a525e">FELÜL</text>
      <g fontSize="17" fill="#aeb0b4">
        <text x="1527" y="207">É</text>
        <text x="1470" y="263">N<tspan fontSize="14">Y</tspan></text>
        <text x="1584" y="263">K</text>
        <text x="1527" y="320">D</text>
      </g>
    </svg>
  </ViewCube>
);

const Nav = () => (
  <NavBar>
    <svg width="32" height="213" viewBox="0 0 32 213" fill="none" stroke="#363c43" strokeWidth="1.300">
      <circle cx="26" cy="5" r="3.500" /><path d="M24 3l4 4M28 3l-4 4" />
      <path d="M27 20v11a11 11 0 1 1-11-11z" /><circle cx="16" cy="31" r="5" /><path d="M16 24a7 7 0 1 0 7 7" />
      <path d="M13 49h6l-3 3zM13 119h6l-3 3zM13 157h6l-3 3z" fill="#363c43" stroke="none" />
      <path d="M4 56.500h25M4 164.500h25" stroke="#7c8084" strokeDasharray="1 1" />
      <path d="M11 83c-2-5-5-6-7-8 2-2 4 0 6 2l-2-11c1-2 2-1 3 1l2 7-1-11c1-2 3-1 3 1l1 9 1-9c1-2 3-1 3 1v10l3-7c1-1 3-1 2 2l-3 11-1 5z" />
      <path d="M5 91l16 16M21 91L5 107M5 96v-5h5M16 91h5v5M5 102v5h5" /><circle cx="21" cy="104" r="5" fill="#5a5f63" /><path d="M24 108l5 5" strokeWidth="2.500" />
      <path d="M16 129l-4 5h2v14h4v-14h2zM12 137c-10 2-9 7 3 7M20 137c9 2 8 6 1 7M11 142l-4 2 4 3" />
      <path d="M4.500 170.500h6v6h-6zM13.500 170.500h6v6h-6zM22.500 170.500h6v6h-6z" />
      <circle cx="26" cy="206" r="3.500" /><path d="M23 206h6" />
    </svg>
  </NavBar>
);

/* ---------- command line ---------- */
const Command = styled.form`
  position: absolute;
  left: 382px;
  bottom: 0;
  display: flex;
  width: 589px;
  height: 20px;
  background: #2b313c;
`;
const CommandTools = styled.div`
  display: flex;
  align-items: center;
  gap: 9px;
  width: 58px;
  padding: 3px 0 0 4px;
`;
const CommandField = styled.label`
  display: flex;
  align-items: center;
  gap: 4px;
  flex: 1;
  padding: 2px 4px 0;
  border-radius: 2px 2px 0 0;
  background: #bbbdc0;
  input {
    flex: 1;
    padding: 0 0 0 1px;
    outline: 0;
    font: italic 12px "DejaVu Sans Mono", monospace;
  }
  input::placeholder { color: #63686e; opacity: 1; }
`;

/* ---------- context menu ---------- */
const Menu = styled.ul`
  position: absolute;
  left: 1053px;
  top: 415px;
  width: 283px;
  padding: 3px 3px 1px;
  background: #f0f0f0;
  color: #000;
  border: 1px solid #a0a0a0;
  box-shadow: 3px 3px 2px rgba(0, 0, 0, 0.45);
`;
const MenuItem = styled.button`
  display: flex;
  align-items: center;
  width: 100%;
  height: 20px;
  padding-right: 7px;
  text-align: left;
  > span:first-child { width: 24px; padding-left: 1px; flex: none; }
  > span:nth-child(2) { flex: 1; white-space: nowrap; }
`;
const MenuArrow = styled.i`
  margin-bottom: 3px;
  border: 4px solid transparent;
  border-right-width: 0;
  border-left: 4px solid #000;
`;
const MenuSep = styled.li`
  height: 9px;
  padding-top: 3px;
  &::before { content: ''; display: block; height: 2px; background: linear-gradient(#a0a0a0 50%, #fff 50%); }
`;
const Highlight = styled.div`
  position: absolute;
  left: 1053px;
  top: 612px;
  width: 287px;
  height: 86px;
  border: 5px solid #ed1c24;
  pointer-events: none;
`;
const menu = [
  { t: ['I', 'smétlés: EDITGRAPHPROPERTIES'] }, { t: ['', 'Legutóbbi bevitel'], sub: 1 }, 0,
  { t: ['O', 'bjektumok elkülönítése'], sub: 1 }, { t: ['V', 'ágólap'], sub: 1 }, 0,
  { t: ['E', 'gyszerű módosító eszközök'], sub: 1 }, { t: ['M', 'egjelenítési sorrend'], sub: 1 }, 0,
  { t: ['T', 'ulajdonságok...'], icon: misc.mProps }, { t: ['G', 'yors kijelölés...'], icon: misc.mQuick }, 0,
  { t: ['', 'Hossz-szelvény nézet tulajdonságok...'] }, { t: ['', 'Hossz-szelvény nézet stílus szerkesztése...'] },
  { t: ['', 'Hossz-szelvény nézet fej- és láblécei'], sub: 1 }, { t: ['', 'Lekérdezés...'] }, 0,
  { t: ['', 'Object Viewer...'], icon: misc.mView }, 0,
  { t: ['', 'Select Similar'] }, { t: ['', 'Count Selection'] },
];

/* ---------- right side ---------- */
const ToolColumn = styled.div`
  display: flex;
  flex-direction: column;
  flex: none;
  gap: 2px;
  width: 37px;
  padding: 0 8px 0 4px;
`;
const ToolBar = styled.div`
  display: flex;
  flex-direction: column;
  align-items: center;
  padding-top: 2px;
  border: 1px solid ${c.dark};
`;
const ToolBtn = styled.button`
  display: flex;
  align-items: center;
  justify-content: center;
  width: 22px;
  height: 22px;
`;
const ToolSep = styled.i`
  width: 19px;
  height: 2px;
  margin: 2px 0;
  background: #eee;
`;
const tools = ['angle', 'bearing', 'deflect', 'azimuth', 'sheet', 'globeGrid', 'globe', 'ptNum', 'ptName', 'ptPick', 'ptZoom', 'side', 'station', 0, 'filter', 0, 'alignPt', 'alignSurf', 'alignPoint', 0, 'corner', 'slope', 'slopeDown', 'distance', 'circle', 'dim', 'calc'];

const Properties = styled.aside`
  display: flex;
  flex: none;
  width: 267px;
  padding-top: 2px;
`;
const PropBody = styled.div`
  flex: 1;
  min-width: 0;
`;
const PropTop = styled.div`
  display: flex;
  align-items: center;
  gap: 8px;
  padding: 12px 8px 8px 6px;
  ${SelectBox} { margin-right: auto; }
`;
const Group = styled.section`
  width: 222px;
  margin: 0 0 3px 10px;
`;
const GroupHead = styled.button`
  display: flex;
  align-items: center;
  justify-content: space-between;
  width: 100%;
  height: 20px;
  padding: 0 7px;
  font-weight: 700;
  background: ${c.header};
`;
const PropTable = styled.table`
  width: 205px;
  margin-left: 17px;
  border-collapse: collapse;
  table-layout: fixed;
  th, td {
    height: 19px;
    padding: 1px 0 0 3px;
    border: 1px solid ${c.line};
    border-top: 0;
    font-weight: 400;
    text-align: left;
    white-space: nowrap;
    overflow: hidden;
  }
  th { width: 91px; padding-left: 7px; color: #d3d5d9; }
`;
const Val = styled.span`
  display: flex;
  align-items: center;
  gap: ${(p) => p.$gap || 0}px;
  height: 16px;
  color: ${(p) => (p.$dim ? '#878d96' : c.text)};
`;
const Stroke = styled.i`
  width: 51px;
  height: 1px;
  background: #fff;
`;
const Swatch = styled.i`
  width: 14px;
  height: 14px;
  background: #fff;
`;
const LayerMark = () => <svg width="10" height="10" viewBox="0 0 10 10"><path d="M0 0h10v10H0z" fill="#000" /><path d="M1 1v8h8z" fill="#fff" /></svg>;
const groups = [
  ['Információ', [['Stílus', 'Profile View'], ['Név', 'Tengely1'], ['Leírás', <Icon key="i" d={misc.sheet} />], ['Eszköztippek...', 'Igen']]],
  ['Általános', [
    ['True Color', <><Swatch />Fólia</>, 6], ['Layer', <><LayerMark />C-ROAD-PRO...</>, 8], ['Linetype', <><Stroke />Fólia</>, 4],
    ['Linetype scale', '1.000'], ['Plot style', 'Szín', 0, 1], ['Lineweight', <><Stroke />Fólia</>, 4], ['Hyperlink', '']]],
  ['Adat', [['Szülő  nyomv...', 'Tengely', 0, 1]]],
];

const VTabList = ({ items }) => (
  <VTabs>{items.map((t, i) => <VTab key={t} $on={i === 0}>{t}</VTab>)}</VTabs>
);

export default function App() {
  return (
    <Shell>
      <Global />
      <TabRow>
        {tabs.map((t, i) => <RibbonTab key={t} $on={i === tabs.length - 1}>{t}</RibbonTab>)}
        <Collapse aria-label="Menüszalag"><span><UpCaret /></span><Caret /></Collapse>
      </TabRow>
      <Ribbon>
        <Panel $w={211}>
          <PanelBody>
            <Big w={88} icon="tagEdit" label={'Hossz-szelvény\nfeliratai'} />
            <Big w={122} icon="tag" label={'Nézetek feliratainak\nhozzáadása'} caret />
          </PanelBody>
          <PanelTitle>Feliratok</PanelTitle>
        </Panel>
        <Panel $w={235}>
          <PanelBody>
            <Big w={68} icon="inquiry" label="Lekérdezés" />
            <Stack>
              <Small icon="props" label="Tulajdonságok" />
              <Small icon="viewer" label="Objektummegtekintő" />
              <Small icon="isolate" label="Objektumok elkülönítése" />
            </Stack>
          </PanelBody>
          <PanelTitle>Általános eszközök<Caret $s={4} /></PanelTitle>
        </Panel>
        <Panel $w={289}>
          <PanelBody>
            <Big w={106} icon="profProps" label={'Hossz-szelvény\ntulajdonságai'} caret />
            <Big w={62} icon="profEdit" label={'Geometria-\nszerkesztő'} />
            <Big w={120} icon="book" label={'Tervezési kritériumok\nszerkesztése'} />
          </PanelBody>
          <PanelTitle>Hossz-szelvény módosítása</PanelTitle>
        </Panel>
        <Panel $w={166}>
          <PanelBody>
            <Stack $mid>
              <Small icon="refresh" label="Fej- és láblécek frissítése" />
              <Small icon="auto" label="Automatikus frissítés" on />
            </Stack>
          </PanelBody>
          <PanelTitle>Pontközelségi fej- és láblécek</PanelTitle>
        </Panel>
        <Panel $w={128}>
          <PanelBody><Big w={124} icon="viewProps" label={'Hossz-szelvény\nnézet tulajdonságai'} caret /></PanelBody>
          <PanelTitle>Nézet módosítása</PanelTitle>
        </Panel>
        <Panel $w={73}>
          <PanelBody><Big w={72} icon="tracker" label={'Szelvény-\nkövető'} caret /></PanelBody>
          <PanelTitle>Elemzés</PanelTitle>
        </Panel>
        <Panel $w={650} $last>
          <PanelBody>
            <Big w={112} icon="profNew" label={'Hossz-szelvény\nlétrehozási eszközei'} />
            <Stack $flush>
              <Small icon="draw" label="Berajzolás a hossz-szelvénybe" />
              <StackRow>
                <Small icon="project" label="Objektumok vetítése a hossz-szelvény nézetbe" />
                <Small icon="offset" label="Kitérők berajzolása a hossz-szelvény nézetbe" />
              </StackRow>
              <Small icon="overlay" label="Rávetített hossz-szelvény" />
            </Stack>
          </PanelBody>
          <PanelTitle>Indítás<Caret $s={4} /></PanelTitle>
        </Panel>
      </Ribbon>
      <FileBar>
        <Burger aria-label="Menü" />
        <Slash />
        <FileTab>Kezdés</FileTab>
        <ActiveFile>
          Casjogsi3 fejezet vege_20241118*
          <svg width="9" height="9" viewBox="0 0 9 9"><path d="M1 1l7 7M8 1L1 8" stroke="#aeb2b8" strokeWidth="2" /></svg>
        </ActiveFile>
        <svg width="14" height="14" viewBox="0 0 14 14"><path d="M7 0v14M0 7h14" stroke="#eee" strokeWidth="2" /></svg>
        <Slash />
      </FileBar>
      <Main>
        <Side>
          <SideBody>
            <PaletteTitle><Grip />ESZKÖZTÁR</PaletteTitle>
            <SideTools>
              <Blank />
              <Icon d={misc.swap} />
              <Icon d={misc.list} />
              <Help>?</Help>
            </SideTools>
            <SelectBox>
              <select aria-label="Nézet"><option>Aktív rajz nézet</option></select>
              <svg width="9" height="6" viewBox="0 0 9 6"><path d="M.5.5l4 4 4-4" fill="none" stroke="#444" /></svg>
            </SelectBox>
            <TreeBox>
              <ul>
                <TreeRow $bold>
                  <Branch $line="start" $arm><Toggle $open aria-label="Rajz" /></Branch>
                  <Icon d={tree.doc} />Casjogsi3 fejezet vege_202411...
                </TreeRow>
                <Leaves rows={treeRows} outer="mid" />
                <TreeRow>
                  <Branch $line="end" $arm><Toggle $open aria-label="Adathivatkozások" /></Branch>
                  <Icon d={tree.data} />Adathivatkozások []
                </TreeRow>
                <Leaves rows={refRows} />
              </ul>
            </TreeBox>
            <LowerBox />
          </SideBody>
          <VTabList items={['Kereső', 'Beállítások', 'Földmérés', 'Eszközkészlet']} />
        </Side>

        <Canvas>
          <Drawing />
          <ViewLabel>[−][Felül][2D drótváz]</ViewLabel>
          <WinButtons>
            <svg width="50" height="12" viewBox="0 0 50 12">
              <path d="M0 6h10v3H0z" fill="#eee" />
              <path d="M22 3V1h8v7h-2" fill="none" stroke="#eee" strokeWidth="1.500" /><path d="M20.500 3.500h7v7h-7z" fill="none" stroke="#eee" strokeWidth="2" />
              <path d="M41 1l7 9M48 1l-7 9" stroke="#eee" strokeWidth="2.400" />
            </svg>
          </WinButtons>
          <Cube />
          <Vkr>VKR<svg width="9" height="6" viewBox="0 0 9 6"><path d="M.5.5h8l-4 4.500z" fill="none" stroke="#d0d2d4" /></svg></Vkr>
          <Nav />
          <Command>
            <CommandTools>
              <svg width="5" height="18" viewBox="0 0 5 18"><path d="M1 0v18M4 0v18" stroke="#c8cacd" strokeWidth="2" strokeDasharray="2 1" /></svg>
              <svg width="9" height="10" viewBox="0 0 9 10"><path d="M1 1l7 8M8 1L1 9" stroke="#b8babd" strokeWidth="2" /></svg>
              <svg width="16" height="16" viewBox="0 0 16 16"><path d="M1 15L9 7" stroke="#b8babd" strokeWidth="3" /><path d="M13 1a4 4 0 1 0 3 4l-3 2-3-1 0-3z" fill="#b8babd" /></svg>
            </CommandTools>
            <CommandField>
              <svg width="16" height="14" viewBox="0 0 16 14"><path d="M.5.5h15v13H.5z" fill="#9fa5ac" stroke="#4a525e" /><path d="M0 0h16v3H0z" fill="#4a525e" /><path d="M3 5l3 3-3 3M8 11h4" fill="none" stroke="#333" /></svg>
              <Caret $s={4} $c="#4a525e" />
              <input aria-label="Parancs" placeholder="Írjon be egy parancsot" />
              <UpCaret $c="#4a525e" />
            </CommandField>
          </Command>
          <Menu>
            {menu.map((m, i) => (m === 0 ? <MenuSep key={i} /> : (
              <li key={i}>
                <MenuItem>
                  <span>{m.icon && <Icon d={m.icon} />}</span>
                  <span><u>{m.t[0]}</u>{m.t[1]}</span>
                  {m.sub && <MenuArrow />}
                </MenuItem>
              </li>
            )))}
          </Menu>
          <Highlight />
        </Canvas>

        <ToolColumn>
          <ToolBar>
            <GripWide />
            {tools.map((t, i) => (t === 0 ? <ToolSep key={i} /> : <ToolBtn key={t} aria-label={t}><Icon d={tool[t]} /></ToolBtn>))}
          </ToolBar>
          <ToolBar>
            <GripWide />
            {['filter', 'filterSheet', 'filterNum'].map((t) => <ToolBtn key={t} aria-label={t}><Icon d={tool[t]} /></ToolBtn>)}
          </ToolBar>
        </ToolColumn>

        <Properties>
          <VTabList items={['Terv', 'Display', 'Extended Data', 'Objektumosztály', 'Megjelenítés']} />
          <PropBody>
            <PaletteTitle $left $pad={6}><Grip />TULAJDONSÁGOK</PaletteTitle>
            <PropTop>
              <SelectBox $dark>
                <select aria-label="Objektum"><option>Hossz-szelvény nézet</option></select>
                <Caret $s={4} />
              </SelectBox>
              <Icon d={misc.addSel} />
              <Icon d={misc.select} />
              <Icon d={misc.quick} />
            </PropTop>
            {groups.map(([name, rows]) => (
              <Group key={name}>
                <GroupHead>{name}<Caret $s={4} /></GroupHead>
                <PropTable>
                  <tbody>
                    {rows.map(([k, v, gap, dim]) => (
                      <tr key={k}><th scope="row">{k}</th><td><Val $gap={gap} $dim={dim}>{v}</Val></td></tr>
                    ))}
                  </tbody>
                </PropTable>
              </Group>
            ))}
          </PropBody>
        </Properties>
      </Main>
    </Shell>
  );
}
